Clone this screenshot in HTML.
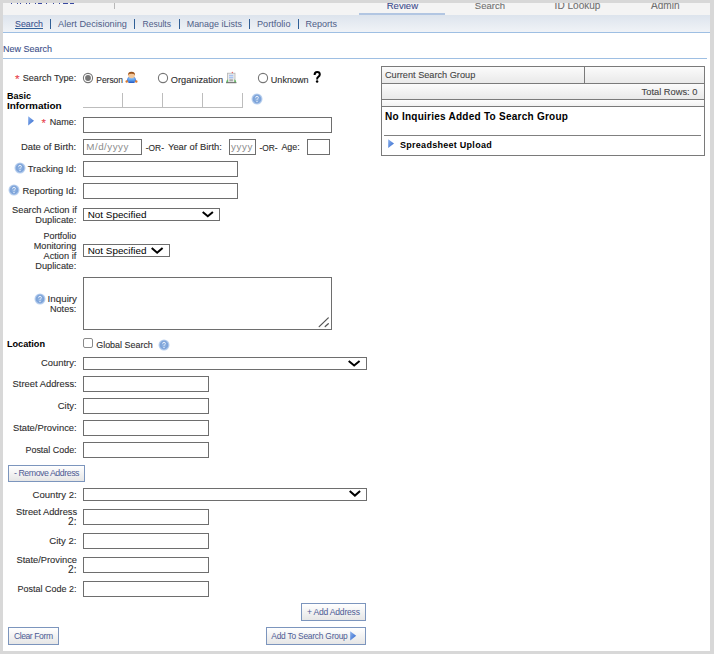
<!DOCTYPE html>
<html><head><meta charset="utf-8"><style>
html,body{margin:0;padding:0;background:#fff;width:714px;height:654px;overflow:hidden}
body{position:relative;font-family:"Liberation Sans",sans-serif}
div,span,svg{position:absolute}
span{white-space:nowrap;-webkit-text-stroke:0.1px currentColor}
</style></head><body>
<div style="left:3px;top:3px;width:707px;height:12px;background:#f4f4f4"></div>
<div style="left:3px;top:15px;width:707px;height:17px;background:linear-gradient(#dde4ed,#f0f3f7)"></div>
<div style="left:3px;top:32px;width:707px;height:1px;background:#9ebfe3"></div>
<div style="left:11px;top:3px;width:1px;height:1px;background:#3848a0"></div>
<div style="left:17px;top:3px;width:1px;height:1px;background:#3848a0"></div>
<div style="left:20px;top:3px;width:1px;height:1px;background:#3848a0"></div>
<div style="left:26px;top:3px;width:1px;height:1px;background:#3848a0"></div>
<div style="left:29px;top:3px;width:1px;height:1px;background:#3848a0"></div>
<div style="left:35px;top:3px;width:1px;height:1px;background:#3848a0"></div>
<div style="left:38px;top:3px;width:4px;height:1px;background:#3848a0"></div>
<div style="left:46px;top:3px;width:1px;height:1px;background:#3848a0"></div>
<div style="left:53px;top:3px;width:1px;height:1px;background:#3848a0"></div>
<div style="left:59px;top:3px;width:1px;height:1px;background:#3848a0"></div>
<div style="left:63px;top:3px;width:5px;height:1px;background:#3848a0"></div>
<div style="left:70px;top:3px;width:4px;height:1px;background:#3848a0"></div>
<div style="left:114px;top:3px;width:1px;height:6px;background:#b8b8b8"></div>
<span style="left:386.70px;top:1px;font-size:9.57px;line-height:9.57px;color:#3d4c8c;">Review</span>
<div style="left:359px;top:13px;width:86px;height:2px;background:#b2c6e2"></div>
<span style="left:474.80px;top:1px;font-size:9.53px;line-height:9.53px;color:#707070;">Search</span>
<span style="left:554.60px;top:1px;font-size:10.07px;line-height:10.07px;color:#707070;">ID Lookup</span>
<span style="left:651.00px;top:1px;font-size:10.05px;line-height:10.05px;color:#707070;">Admin</span>
<span style="left:15.00px;top:20px;font-size:8.84px;line-height:8.84px;color:#3e5590;">Search</span>
<div style="left:15px;top:28px;width:28px;height:1px;background:#30609a"></div>
<div style="left:50px;top:19px;width:1px;height:10px;background:#2f5f96"></div>
<div style="left:134px;top:19px;width:1px;height:10px;background:#2f5f96"></div>
<div style="left:179px;top:19px;width:1px;height:10px;background:#2f5f96"></div>
<div style="left:249px;top:19px;width:1px;height:10px;background:#2f5f96"></div>
<div style="left:298px;top:19px;width:1px;height:10px;background:#2f5f96"></div>
<span style="left:58.00px;top:20px;font-size:9.2px;line-height:9.2px;color:#4f5d88;-webkit-text-stroke:0">Alert Decisioning</span>
<span style="left:142.50px;top:20px;font-size:8.55px;line-height:8.55px;color:#4f5d88;-webkit-text-stroke:0">Results</span>
<span style="left:186.70px;top:20px;font-size:8.96px;line-height:8.96px;color:#4f5d88;-webkit-text-stroke:0">Manage iLists</span>
<span style="left:257.00px;top:20px;font-size:9.13px;line-height:9.13px;color:#4f5d88;-webkit-text-stroke:0">Portfolio</span>
<span style="left:305.50px;top:20px;font-size:9.0px;line-height:9.0px;color:#4f5d88;-webkit-text-stroke:0">Reports</span>
<span style="left:3.00px;top:45px;font-size:9.0px;line-height:9.0px;color:#3e4f8a;">New Search</span>
<div style="left:3px;top:58px;width:704px;height:1px;background:#9ebfe3"></div>
<span style="left:14.90px;top:74px;font-size:11.83px;line-height:11.83px;color:#e8404a;">*</span>
<span style="left:22.70px;top:74px;font-size:9.12px;line-height:9.12px;color:#2e2e2e;">Search Type:</span>
<span style="left:96.30px;top:76px;font-size:8.43px;line-height:8.43px;color:#2e2e2e;">Person</span>
<span style="left:170.80px;top:76px;font-size:9.22px;line-height:9.22px;color:#2e2e2e;">Organization</span>
<span style="left:270.80px;top:76px;font-size:9.07px;line-height:9.07px;color:#2e2e2e;">Unknown</span>
<span style="left:6.90px;top:92px;font-size:9.0px;line-height:9.0px;color:#000;font-weight:bold;-webkit-text-stroke:0;">Basic</span>
<span style="left:6.90px;top:101px;font-size:9.98px;line-height:9.98px;color:#000;font-weight:bold;-webkit-text-stroke:0;">Information</span>
<div style="left:83px;top:107px;width:160px;height:1px;background:#bdbdbd"></div>
<div style="left:122px;top:93px;width:1px;height:14px;background:#bdbdbd"></div>
<div style="left:162px;top:93px;width:1px;height:14px;background:#bdbdbd"></div>
<div style="left:202px;top:93px;width:1px;height:14px;background:#bdbdbd"></div>
<div style="left:242px;top:93px;width:1px;height:14px;background:#bdbdbd"></div>
<span style="left:41.60px;top:118px;font-size:11.31px;line-height:11.31px;color:#e8404a;">*</span>
<span style="left:49.80px;top:118px;font-size:9.0px;line-height:9.0px;color:#2e2e2e;">Name:</span>
<div style="left:83px;top:117px;width:249px;height:16px;border:1px solid #6e6e6e;background:#fff;box-sizing:border-box"></div>
<span style="left:20.90px;top:142px;font-size:9.46px;line-height:9.46px;color:#2e2e2e;">Date of Birth:</span>
<div style="left:83px;top:139px;width:59px;height:16px;border:1px solid #6e6e6e;background:#fff;box-sizing:border-box"></div>
<span style="left:86.30px;top:142px;font-size:9.8px;line-height:9.8px;color:#8c8c8c;letter-spacing:0.477px;-webkit-text-stroke:0">M/d/yyyy</span>
<span style="left:145.80px;top:144px;font-size:8.4px;line-height:8.4px;color:#2e2e2e;">-OR-</span>
<span style="left:168.00px;top:142px;font-size:9.4px;line-height:9.4px;color:#2e2e2e;">Year of Birth:</span>
<div style="left:229px;top:139px;width:27px;height:16px;border:1px solid #6e6e6e;background:#fff;box-sizing:border-box"></div>
<span style="left:231.00px;top:142px;font-size:9.8px;line-height:9.8px;color:#8c8c8c;letter-spacing:0.600px;-webkit-text-stroke:0">yyyy</span>
<span style="left:259.40px;top:144px;font-size:8.4px;line-height:8.4px;color:#2e2e2e;">-OR-</span>
<span style="left:281.40px;top:143px;font-size:8.9px;line-height:8.9px;color:#2e2e2e;">Age:</span>
<div style="left:307px;top:139px;width:23px;height:16px;border:1px solid #6e6e6e;background:#fff;box-sizing:border-box"></div>
<span style="left:27.70px;top:165px;font-size:9.37px;line-height:9.37px;color:#2e2e2e;">Tracking Id:</span>
<div style="left:83px;top:161px;width:155px;height:16px;border:1px solid #6e6e6e;background:#fff;box-sizing:border-box"></div>
<span style="left:22.40px;top:186px;font-size:9.41px;line-height:9.41px;color:#2e2e2e;">Reporting Id:</span>
<div style="left:83px;top:183px;width:155px;height:16px;border:1px solid #6e6e6e;background:#fff;box-sizing:border-box"></div>
<span style="left:12.00px;top:206px;font-size:9.34px;line-height:9.34px;color:#2e2e2e;">Search Action if</span>
<span style="left:35.30px;top:216px;font-size:9.22px;line-height:9.22px;color:#2e2e2e;">Duplicate:</span>
<div style="left:83px;top:208px;width:137px;height:13px;border:1px solid #6e6e6e;background:#fff;box-sizing:border-box"></div>
<span style="left:87.70px;top:210px;font-size:9.89px;line-height:9.89px;color:#000;-webkit-text-stroke:0">Not Specified</span>
<span style="left:43.50px;top:232px;font-size:8.94px;line-height:8.94px;color:#2e2e2e;">Portfolio</span>
<span style="left:33.80px;top:242px;font-size:9.1px;line-height:9.1px;color:#2e2e2e;">Monitoring</span>
<span style="left:43.50px;top:252px;font-size:9.22px;line-height:9.22px;color:#2e2e2e;">Action if</span>
<span style="left:35.30px;top:262px;font-size:9.22px;line-height:9.22px;color:#2e2e2e;">Duplicate:</span>
<div style="left:83px;top:244px;width:87px;height:13px;border:1px solid #6e6e6e;background:#fff;box-sizing:border-box"></div>
<span style="left:87.70px;top:246px;font-size:9.89px;line-height:9.89px;color:#000;-webkit-text-stroke:0">Not Specified</span>
<span style="left:47.60px;top:294px;font-size:9.8px;line-height:9.8px;color:#2e2e2e;">Inquiry</span>
<span style="left:50.00px;top:305px;font-size:9.1px;line-height:9.1px;color:#2e2e2e;">Notes:</span>
<div style="left:83px;top:277px;width:249px;height:53px;border:1px solid #6e6e6e;background:#fff;box-sizing:border-box"></div>
<span style="left:6.90px;top:340px;font-size:9.17px;line-height:9.17px;color:#000;font-weight:bold;-webkit-text-stroke:0;">Location</span>
<div style="left:83px;top:338px;width:10px;height:10px;border:1px solid #8a8a8a;border-radius:2px;box-sizing:border-box;background:#fff"></div>
<span style="left:96.20px;top:341px;font-size:8.95px;line-height:8.95px;color:#2e2e2e;">Global Search</span>
<span style="left:41.00px;top:358px;font-size:9.39px;line-height:9.39px;color:#2e2e2e;">Country:</span>
<div style="left:83px;top:357px;width:284px;height:13px;border:1px solid #6e6e6e;background:#fff;box-sizing:border-box"></div>
<span style="left:12.60px;top:380px;font-size:9.38px;line-height:9.38px;color:#2e2e2e;">Street Address:</span>
<div style="left:83px;top:376px;width:126px;height:16px;border:1px solid #6e6e6e;background:#fff;box-sizing:border-box"></div>
<span style="left:57.70px;top:401px;font-size:9.5px;line-height:9.5px;color:#2e2e2e;">City:</span>
<div style="left:83px;top:398px;width:126px;height:16px;border:1px solid #6e6e6e;background:#fff;box-sizing:border-box"></div>
<span style="left:12.90px;top:423px;font-size:9.41px;line-height:9.41px;color:#2e2e2e;">State/Province:</span>
<div style="left:83px;top:420px;width:126px;height:16px;border:1px solid #6e6e6e;background:#fff;box-sizing:border-box"></div>
<span style="left:25.50px;top:446px;font-size:8.94px;line-height:8.94px;color:#2e2e2e;">Postal Code:</span>
<div style="left:83px;top:442px;width:126px;height:16px;border:1px solid #6e6e6e;background:#fff;box-sizing:border-box"></div>
<div style="left:8px;top:465px;width:77px;height:17px;border:1px solid #7c95bd;background:linear-gradient(#ffffff,#e6e6e6);box-sizing:border-box"></div>
<span style="left:14.00px;top:469px;font-size:8.8px;line-height:8.8px;color:#4d5b94;letter-spacing:-0.459px;-webkit-text-stroke:0">- Remove Address</span>
<span style="left:32.50px;top:490px;font-size:9.58px;line-height:9.58px;color:#2e2e2e;">Country 2:</span>
<div style="left:83px;top:488px;width:284px;height:13px;border:1px solid #6e6e6e;background:#fff;box-sizing:border-box"></div>
<span style="left:16.00px;top:508px;font-size:9.33px;line-height:9.33px;color:#2e2e2e;">Street Address</span>
<span style="left:68.00px;top:517px;font-size:10.19px;line-height:10.19px;color:#2e2e2e;">2:</span>
<div style="left:83px;top:509px;width:126px;height:16px;border:1px solid #6e6e6e;background:#fff;box-sizing:border-box"></div>
<span style="left:49.20px;top:536px;font-size:9.63px;line-height:9.63px;color:#2e2e2e;">City 2:</span>
<div style="left:83px;top:533px;width:126px;height:16px;border:1px solid #6e6e6e;background:#fff;box-sizing:border-box"></div>
<span style="left:16.50px;top:556px;font-size:9.3px;line-height:9.3px;color:#2e2e2e;">State/Province</span>
<span style="left:68.00px;top:565px;font-size:10.19px;line-height:10.19px;color:#2e2e2e;">2:</span>
<div style="left:83px;top:557px;width:126px;height:16px;border:1px solid #6e6e6e;background:#fff;box-sizing:border-box"></div>
<span style="left:17.60px;top:585px;font-size:8.98px;line-height:8.98px;color:#2e2e2e;">Postal Code 2:</span>
<div style="left:83px;top:581px;width:126px;height:16px;border:1px solid #6e6e6e;background:#fff;box-sizing:border-box"></div>
<div style="left:301px;top:603px;width:65px;height:18px;border:1px solid #7c95bd;background:linear-gradient(#ffffff,#e6e6e6);box-sizing:border-box"></div>
<span style="left:307.00px;top:608px;font-size:8.6px;line-height:8.6px;color:#4d5b94;letter-spacing:-0.225px;-webkit-text-stroke:0">+ Add Address</span>
<div style="left:8px;top:627px;width:51px;height:18px;border:1px solid #7c95bd;background:linear-gradient(#ffffff,#e6e6e6);box-sizing:border-box"></div>
<span style="left:13.90px;top:632px;font-size:8.6px;line-height:8.6px;color:#4d5b94;letter-spacing:-0.423px;-webkit-text-stroke:0">Clear Form</span>
<div style="left:266px;top:627px;width:100px;height:18px;border:1px solid #7c95bd;background:linear-gradient(#ffffff,#e6e6e6);box-sizing:border-box"></div>
<span style="left:271.30px;top:632px;font-size:8.4px;line-height:8.4px;color:#4d5b94;letter-spacing:-0.218px;-webkit-text-stroke:0">Add To Search Group</span>
<div style="left:381px;top:66px;width:324px;height:90px;border:1px solid #7a7a7a;box-sizing:border-box;background:#fff"></div>
<div style="left:382px;top:67px;width:322px;height:16px;background:linear-gradient(#fbfbfb,#e9e9e9)"></div>
<div style="left:382px;top:83px;width:322px;height:1px;background:#7a7a7a"></div>
<div style="left:584px;top:67px;width:1px;height:16px;background:#7a7a7a"></div>
<div style="left:382px;top:84px;width:322px;height:15px;background:linear-gradient(#fbfbfb,#e9e9e9)"></div>
<div style="left:382px;top:99px;width:322px;height:1px;background:#7a7a7a"></div>
<div style="left:382px;top:100px;width:322px;height:6px;background:linear-gradient(#fdfdfd,#f2f2f2)"></div>
<div style="left:382px;top:106px;width:322px;height:1px;background:#7a7a7a"></div>
<span style="left:385.00px;top:71px;font-size:9.19px;line-height:9.19px;color:#444;">Current Search Group</span>
<span style="left:641.60px;top:88px;font-size:9.3px;line-height:9.3px;color:#444;">Total Rows: 0</span>
<span style="left:385.00px;top:112px;font-size:10.03px;line-height:10.03px;color:#000;font-weight:bold;-webkit-text-stroke:0;letter-spacing:0.249px;">No Inquiries Added To Search Group</span>
<div style="left:384px;top:135px;width:317px;height:1px;background:#808080"></div>
<span style="left:400.00px;top:141px;font-size:9.01px;line-height:9.01px;color:#000;font-weight:bold;-webkit-text-stroke:0;letter-spacing:0.275px;">Spreadsheet Upload</span>
<div style="left:0px;top:0px;width:714px;height:3px;background:#d8d8d8"></div>
<div style="left:0px;top:0px;width:3px;height:654px;background:#d8d8d8"></div>
<div style="left:710px;top:0px;width:4px;height:654px;background:#d8d8d8"></div>
<div style="left:0px;top:651px;width:714px;height:3px;background:#d8d8d8"></div>
<svg style="left:82px;top:72px" width="12" height="12" viewBox="0 0 12 12"><circle cx="6" cy="6" r="4.6" fill="#fff" stroke="#767676" stroke-width="1.1"/><circle cx="6" cy="6" r="2.9" fill="#767676"/></svg>
<svg style="left:157px;top:72px" width="12" height="12" viewBox="0 0 12 12"><circle cx="6" cy="6" r="4.6" fill="#fff" stroke="#767676" stroke-width="1.1"/></svg>
<svg style="left:257px;top:72px" width="12" height="12" viewBox="0 0 12 12"><circle cx="6" cy="6" r="4.6" fill="#fff" stroke="#767676" stroke-width="1.1"/></svg>
<svg style="left:125px;top:71px" width="13" height="13" viewBox="0 0 13 13">
<defs><linearGradient id="pb" x1="0" y1="0" x2="0" y2="1"><stop offset="0" stop-color="#9ccaf8"/><stop offset="0.5" stop-color="#5aa0ee"/><stop offset="1" stop-color="#2456c0"/></linearGradient>
<linearGradient id="ph" x1="0" y1="0" x2="0" y2="1"><stop offset="0" stop-color="#8a4a18"/><stop offset="1" stop-color="#c47030"/></linearGradient></defs>
<path d="M1.6 10.6 L2.6 7 Q3.2 5.9 4.5 5.9 L8.5 5.9 Q9.8 5.9 10.4 7 L11.4 10.6 Z" fill="#4a7fd8"/>
<path d="M3.2 8 Q3.2 6.3 5 6.3 L8 6.3 Q9.8 6.3 9.8 8 L9.8 11.2 Q9.8 12 9 12 L4 12 Q3.2 12 3.2 11.2 Z" fill="url(#pb)"/>
<ellipse cx="6.5" cy="4.1" rx="3.5" ry="3.1" fill="#f3c79a"/>
<path d="M2.9 4.6 Q2.7 0.8 6.5 0.8 Q10.3 0.8 10.1 4.6 Q9.6 3 8.4 2.9 Q6.5 2.7 4.6 2.9 Q3.4 3 2.9 4.6 Z" fill="url(#ph)"/>
<circle cx="1.7" cy="10.5" r="1.2" fill="#dc7a2c"/><circle cx="11.3" cy="10.5" r="1.2" fill="#dc7a2c"/>
</svg>
<svg style="left:225px;top:71px" width="13" height="13" viewBox="0 0 13 13">
<rect x="2.4" y="2.2" width="7.6" height="9.3" fill="#ececec" stroke="#b4b4b4" stroke-width="0.8"/>
<rect x="4" y="3.8" width="4.3" height="1.5" fill="#a9c4f0"/>
<rect x="4" y="5.9" width="4.3" height="1.5" fill="#a9c4f0"/>
<rect x="4.4" y="8.3" width="3.5" height="2" fill="#a8a8a8"/>
<circle cx="7.4" cy="1.5" r="0.75" fill="#e56a6a"/>
<path d="M1 11.5 Q1.6 8.6 3 8.2 L3.2 11.5 Z" fill="#66bb66"/>
<path d="M11.4 11.5 Q10.8 8.6 9.4 8.2 L9.2 11.5 Z" fill="#66bb66"/>
<rect x="1" y="11.2" width="10.4" height="1" fill="#6a6a6a"/>
</svg>
<svg style="left:251px;top:93px" width="12" height="12" viewBox="0 0 12 12"><circle cx="6" cy="6" r="5.5" fill="#b8cfee"/><circle cx="6" cy="6" r="4.4" fill="#7fa5da"/><circle cx="6" cy="6" r="2.4" fill="#8cb0e0"/>
<path d="M4.6 4.7 Q4.6 3.3 6 3.3 Q7.4 3.3 7.4 4.6 Q7.4 5.4 6.5 5.8 Q6 6.1 6 6.9" fill="none" stroke="#e9f0fa" stroke-width="1"/>
<circle cx="6" cy="8.5" r="0.7" fill="#e9f0fa"/></svg>
<svg style="left:14px;top:162px" width="12" height="12" viewBox="0 0 12 12"><circle cx="6" cy="6" r="5.5" fill="#b8cfee"/><circle cx="6" cy="6" r="4.4" fill="#7fa5da"/><circle cx="6" cy="6" r="2.4" fill="#8cb0e0"/>
<path d="M4.6 4.7 Q4.6 3.3 6 3.3 Q7.4 3.3 7.4 4.6 Q7.4 5.4 6.5 5.8 Q6 6.1 6 6.9" fill="none" stroke="#e9f0fa" stroke-width="1"/>
<circle cx="6" cy="8.5" r="0.7" fill="#e9f0fa"/></svg>
<svg style="left:8px;top:183.5px" width="12" height="12" viewBox="0 0 12 12"><circle cx="6" cy="6" r="5.5" fill="#b8cfee"/><circle cx="6" cy="6" r="4.4" fill="#7fa5da"/><circle cx="6" cy="6" r="2.4" fill="#8cb0e0"/>
<path d="M4.6 4.7 Q4.6 3.3 6 3.3 Q7.4 3.3 7.4 4.6 Q7.4 5.4 6.5 5.8 Q6 6.1 6 6.9" fill="none" stroke="#e9f0fa" stroke-width="1"/>
<circle cx="6" cy="8.5" r="0.7" fill="#e9f0fa"/></svg>
<svg style="left:34px;top:292.5px" width="12" height="12" viewBox="0 0 12 12"><circle cx="6" cy="6" r="5.5" fill="#b8cfee"/><circle cx="6" cy="6" r="4.4" fill="#7fa5da"/><circle cx="6" cy="6" r="2.4" fill="#8cb0e0"/>
<path d="M4.6 4.7 Q4.6 3.3 6 3.3 Q7.4 3.3 7.4 4.6 Q7.4 5.4 6.5 5.8 Q6 6.1 6 6.9" fill="none" stroke="#e9f0fa" stroke-width="1"/>
<circle cx="6" cy="8.5" r="0.7" fill="#e9f0fa"/></svg>
<svg style="left:158px;top:339px" width="12" height="12" viewBox="0 0 12 12"><circle cx="6" cy="6" r="5.5" fill="#b8cfee"/><circle cx="6" cy="6" r="4.4" fill="#7fa5da"/><circle cx="6" cy="6" r="2.4" fill="#8cb0e0"/>
<path d="M4.6 4.7 Q4.6 3.3 6 3.3 Q7.4 3.3 7.4 4.6 Q7.4 5.4 6.5 5.8 Q6 6.1 6 6.9" fill="none" stroke="#e9f0fa" stroke-width="1"/>
<circle cx="6" cy="8.5" r="0.7" fill="#e9f0fa"/></svg>
<svg style="left:28px;top:115.6px" width="7" height="10.5" viewBox="0 0 7 10.5"><defs><linearGradient id="tg" x1="0" y1="0" x2="1" y2="1"><stop offset="0" stop-color="#8fb4ee"/><stop offset="1" stop-color="#2e66cc"/></linearGradient></defs><path d="M0.2 0.2 L6 4.800000000000011 L0.2 9.5 Z" fill="url(#tg)"/></svg>
<svg style="left:388px;top:139px" width="7" height="10" viewBox="0 0 7 10"><defs><linearGradient id="tg" x1="0" y1="0" x2="1" y2="1"><stop offset="0" stop-color="#8fb4ee"/><stop offset="1" stop-color="#2e66cc"/></linearGradient></defs><path d="M0.2 0.2 L6 4.5 L0.2 9 Z" fill="url(#tg)"/></svg>
<svg style="left:350px;top:630.7px" width="7.199999999999989" height="10.399999999999977" viewBox="0 0 7.199999999999989 10.399999999999977"><defs><linearGradient id="tg" x1="0" y1="0" x2="1" y2="1"><stop offset="0" stop-color="#8fb4ee"/><stop offset="1" stop-color="#2e66cc"/></linearGradient></defs><path d="M0.2 0.2 L6.199999999999989 4.699999999999932 L0.2 9.399999999999977 Z" fill="url(#tg)"/></svg>
<svg style="left:200.5px;top:210.5px" width="13.599999999999994" height="8.0" viewBox="0 0 13.599999999999994 8.0"><path d="M1.7 1.0 L6.80 5.30 L11.90 1.0" fill="none" stroke="#000" stroke-width="2"/></svg>
<svg style="left:150.4px;top:246.6px" width="14.299999999999983" height="8.400000000000006" viewBox="0 0 14.299999999999983 8.400000000000006"><path d="M1.7 1.0 L7.15 5.70 L12.60 1.0" fill="none" stroke="#000" stroke-width="2"/></svg>
<svg style="left:347px;top:359.8px" width="14.300000000000011" height="8.199999999999989" viewBox="0 0 14.300000000000011 8.199999999999989"><path d="M1.7 1.0 L7.15 5.50 L12.60 1.0" fill="none" stroke="#000" stroke-width="2"/></svg>
<svg style="left:347.6px;top:490.3px" width="13.799999999999955" height="8.300000000000011" viewBox="0 0 13.799999999999955 8.300000000000011"><path d="M1.7 1.0 L6.90 5.60 L12.10 1.0" fill="none" stroke="#000" stroke-width="2"/></svg>
<svg style="left:316px;top:315px" width="14" height="14" viewBox="0 0 14 14"><path d="M3.2 11.6 L12.3 2.9 M9.2 11.6 L12.3 8.8" stroke="#555" stroke-width="1.3" stroke-linecap="round" fill="none"/></svg>
<svg style="left:312px;top:70px" width="11" height="14" viewBox="0 0 11 14"><path d="M2.6 4.9 Q2.6 2.1 5.2 2.1 Q7.8 2.1 7.8 4.5 Q7.8 6 6.3 6.9 Q5.1 7.6 5.1 9.4" fill="none" stroke="#000" stroke-width="2"/><circle cx="5.1" cy="11.4" r="1.25" fill="#000"/></svg>
</body></html>
